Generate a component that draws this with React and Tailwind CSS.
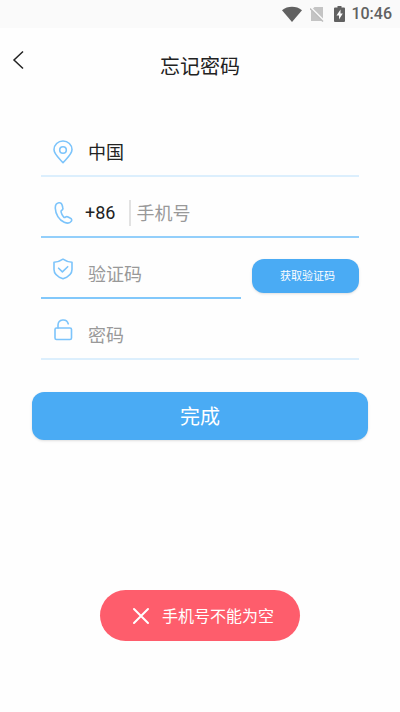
import React, { useState } from 'react';

const PinIcon = () => (
  <svg width="20" height="24" viewBox="0 0 20 24" fill="none" stroke="#7cc4fb" strokeWidth="1.6" aria-hidden="true">
    <path d="M10 22.6C7 19.2 1 14.6 1 9.6a9 8.6 0 0 1 18 0c0 5-6 9.6-9 13z" strokeLinejoin="round" />
    <circle cx="10" cy="10" r="3.3" />
  </svg>
);

const PhoneIcon = () => (
  <svg width="20" height="24" viewBox="0 0 20 24" fill="none" stroke="#7cc4fb" strokeWidth="1.6" aria-hidden="true">
    <path
      d="M5.800 1.800C3.500 2.200 2.200 4.300 2.300 7.200c.2 5.800 3.700 11.800 8.900 14 2.800 1.200 5.800.9 7-.8.9-1.300.5-2.500-.7-3.100l-2.400-1.300c-1.100-.6-1.900-.4-2.700.2-.7.400-1.300.3-1.800-.3-1.300-1.500-2.100-3.100-2.500-4.800-.2-.9 0-1.400.7-1.800 1-.6 1.300-1.500 1-2.600l-.6-2.500C8.700 2.500 7.500 1.500 5.800 1.800z"
      strokeLinejoin="round"
    />
  </svg>
);

const ShieldIcon = () => (
  <svg width="20" height="22" viewBox="0 0 20 22" fill="none" stroke="#7cc4fb" strokeWidth="1.6" strokeLinecap="round" strokeLinejoin="round" aria-hidden="true">
    <path d="M10 1.200c2.600 1.900 5.600 2.900 9 3v7.300c0 4.200-4.500 7.700-9 9.300-4.500-1.600-9-5.100-9-9.300V4.200c3.400-.1 6.400-1.100 9-3z" />
    <path d="M5.600 10.200l3.800 3.700 5.300-5.200" />
  </svg>
);

const UnlockIcon = () => (
  <svg width="20" height="22" viewBox="0 0 20 22" fill="none" stroke="#7cc4fb" strokeWidth="1.6" strokeLinecap="round" aria-hidden="true">
    <rect x="2" y="9" width="16.500" height="11.500" rx="1.500" />
    <path d="M5 9V6a5.200 5.200 0 0 1 10.200-1.200" />
  </svg>
);

const StatusBar = () => (
  <div className="flex h-7 items-center justify-end bg-[#fafafa] pr-2 text-[#616161]">
    <svg width="20" height="16" viewBox="0 0 20 16" fill="currentColor" aria-hidden="true">
      <path d="M0 4.200C5.500-.4 14.500-.4 20 4.200L10 16z" />
    </svg>
    <svg className="ml-2" width="14" height="16" viewBox="0 0 14 16" aria-hidden="true">
      <path d="M4.500 1H13v14H1V4.500z" fill="#c4c4c4" />
      <path d="M0 1l14 14" stroke="#fafafa" strokeWidth="2" />
      <path d="M0 2.500l13 13" stroke="#bdbdbd" strokeWidth="1.500" />
    </svg>
    <svg className="ml-2.5" width="11" height="16" viewBox="0 0 11 16" aria-hidden="true">
      <path d="M3.500 0h4v1.500H10q1 0 1 1V15q0 1-1 1H1q-1 0-1-1V2.500q0-1 1-1h2.500z" fill="currentColor" />
      <path d="M6.500 3.500L2.500 9.500H5v4l3.800-6H6.500z" fill="#fafafa" />
    </svg>
    <span className="ml-1.5 font-[Roboto,sans-serif] text-base leading-5 font-medium">10:46</span>
  </div>
);

export default function App() {
  const [phone, setPhone] = useState('');
  const [code, setCode] = useState('');
  const [password, setPassword] = useState('');

  return (
    <div className="min-h-screen bg-[#fefefe] font-[Roboto,'Noto_Sans_CJK_SC',sans-serif] text-[#222]">
      <StatusBar />

      <header className="grid h-[78px] grid-cols-[1fr_auto_1fr] items-center px-3">
        <button type="button" aria-label="返回" className="mb-3.5 justify-self-start cursor-pointer">
          <svg width="12" height="20" viewBox="0 0 12 20" fill="none" stroke="#222" strokeWidth="1.500">
            <path d="M11 1.500L2 10l9 8.500" />
          </svg>
        </button>
        <h1 className="text-xl leading-7">忘记密码</h1>
      </header>

      <form onSubmit={(e) => e.preventDefault()} className="mt-2.5 px-8">
        <div className="px-[9px] text-lg leading-6">
          {/* Country */}
          <button type="button" className="flex h-[61px] w-full items-center border-b-2 border-[#dceffd] pt-3 pl-3 text-left cursor-pointer">
            <PinIcon />
            <span className="ml-[15px] pt-0.5">中国</span>
          </button>

          {/* Phone */}
          <div className="flex h-[61px] items-center border-b-2 border-[#93cffb] pt-3 pl-3">
            <PhoneIcon />
            <span className="ml-3">+86</span>
            <input
              type="tel"
              aria-label="手机号"
              placeholder="手机号"
              value={phone}
              onChange={(e) => setPhone(e.target.value)}
              className="ml-3.5 min-w-0 flex-1 border-l-2 border-[#e2e2e2] pt-0.5 pl-[5px] outline-none placeholder:text-[#999]"
            />
          </div>

          {/* Verification code */}
          <div className="flex h-[61px] items-stretch gap-[11px]">
            <div className="flex min-w-0 flex-1 items-center border-b-2 border-[#82c8fb] pt-3 pl-3">
              <div className="mb-2.5 shrink-0">
                <ShieldIcon />
              </div>
              <input
                type="text"
                aria-label="验证码"
                placeholder="验证码"
                value={code}
                onChange={(e) => setCode(e.target.value)}
                className="ml-[15px] min-w-0 flex-1 pt-0.5 outline-none placeholder:text-[#999]"
              />
            </div>
            <button
              type="button"
              className="mt-[21px] h-[34px] w-[107px] shrink-0 rounded-xl bg-[#4aabf4] pt-0.5 pl-1 text-[11px] leading-4 text-white shadow-sm cursor-pointer"
            >
              获取验证码
            </button>
          </div>

          {/* Password */}
          <div className="flex h-[61px] items-center border-b-2 border-[#dceffd] pt-3 pl-3">
            <div className="mb-2.5 shrink-0">
              <UnlockIcon />
            </div>
            <input
              type="password"
              aria-label="密码"
              placeholder="密码"
              value={password}
              onChange={(e) => setPassword(e.target.value)}
              className="ml-[15px] min-w-0 flex-1 pt-0.5 outline-none placeholder:text-[#999]"
            />
          </div>
        </div>

        <button
          type="submit"
          className="mt-8 h-12 w-full rounded-xl bg-[#4aabf4] pt-0.5 text-xl leading-7 text-white shadow-sm cursor-pointer"
        >
          完成
        </button>
      </form>

      {/* Toast */}
      <div className="fixed inset-x-0 bottom-[71px] flex justify-center">
        <div role="alert" className="flex h-[51px] w-[200px] items-center rounded-full bg-[#fe5d6c] pl-8 text-base leading-6 text-white">
          <svg width="18" height="18" viewBox="0 0 18 18" fill="none" stroke="currentColor" strokeWidth="2" aria-hidden="true">
            <path d="M2 2l14 14M16 2L2 16" strokeLinecap="round" />
          </svg>
          <span className="ml-3 pt-0.5 whitespace-nowrap">手机号不能为空</span>
        </div>
      </div>
    </div>
  );
}
